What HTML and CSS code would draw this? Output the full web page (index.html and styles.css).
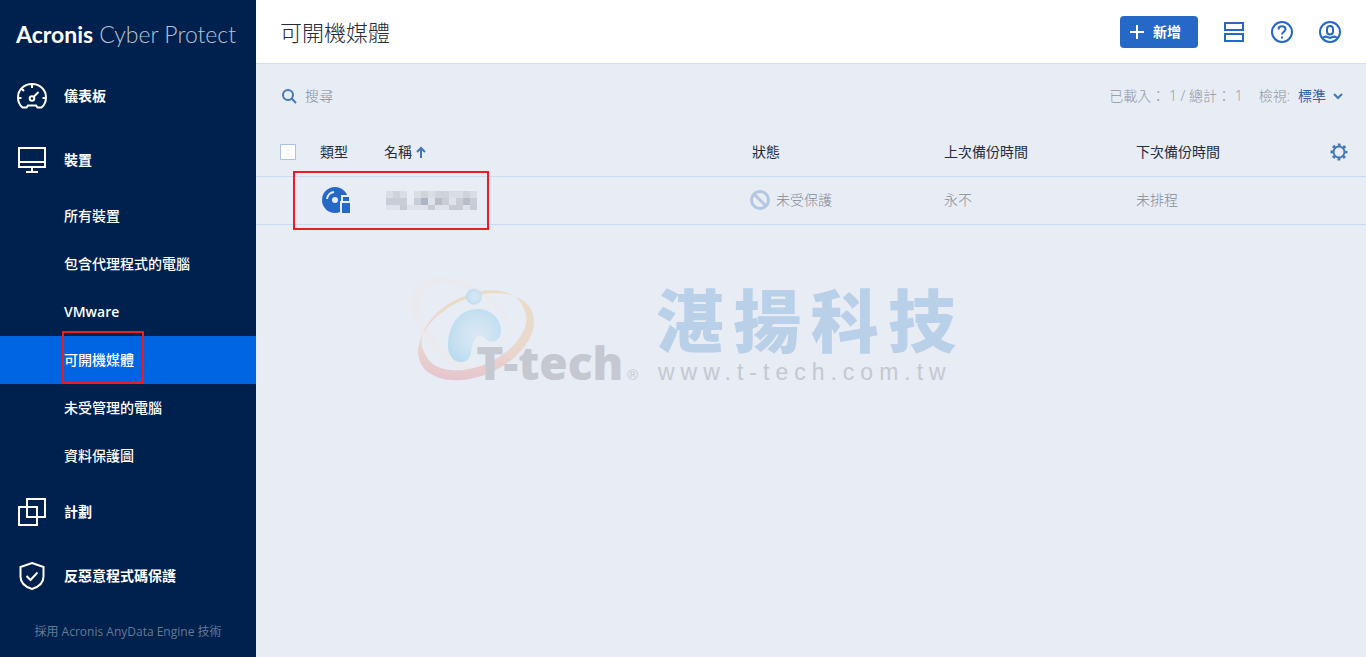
FILE: index.html
```
<!DOCTYPE html>
<html lang="zh-Hant">
<head>
    <meta charset="UTF-8">
    <title>Acronis Cyber Protect</title>
    <meta name="viewport" content="width=device-width, initial-scale=1.0">
    <link rel="stylesheet" href="styles.css">
</head>
<body>
    <aside class="sidebar">
        <div class="brand"><b>Acronis</b><span>Cyber Protect</span></div>
        <nav class="menu">
            <a class="menu-item" href="#">
                <svg width="32" height="32" viewBox="0 0 32 32">
                    <path d="M6.500 27.500C3.600 25 2 21.500 2 17.500C2 9.500 8.300 4 16 4s14 5.500 14 13.500c0 4-1.600 7.500-4.500 10h-4l-1.500-2h-8l-1.500 2z"/>
                    <path d="M16 4v4M2.500 18h3M26.500 18h3M6 9l2 2M18 16.500l4.500-4.500"/>
                    <circle cx="16" cy="18.500" r="2.300"/>
                </svg>
                <span>儀表板</span>
            </a>
            <a class="menu-item" href="#">
                <svg width="32" height="32" viewBox="0 0 32 32">
                    <path d="M3 4h26v19H3zM3 18h26M16 23v5M10 28h12"/>
                </svg>
                <span>裝置</span>
            </a>
            <div class="submenu">
                <a href="#">所有裝置</a>
                <a href="#">包含代理程式的電腦</a>
                <a class="latin" href="#">VMware</a>
                <a class="active" href="#"><span class="marked">可開機媒體</span></a>
                <a href="#">未受管理的電腦</a>
                <a href="#">資料保護圖</a>
            </div>
            <a class="menu-item" href="#">
                <svg width="32" height="32" viewBox="0 0 32 32">
                    <path d="M11 3h18v18H11zM3 11h18v18H3z"/>
                </svg>
                <span>計劃</span>
            </a>
            <a class="menu-item" href="#">
                <svg width="32" height="32" viewBox="0 0 32 32">
                    <path d="M16 3l11.500 4v9.500c0 6-5 10.500-11.500 12.500c-6.500-2-11.500-6.500-11.500-12.500V7z"/>
                    <path d="M10.500 16l4 4l7-7.500"/>
                </svg>
                <span>反惡意程式碼保護</span>
            </a>
        </nav>
        <p class="powered">採用 Acronis AnyData Engine 技術</p>
    </aside>

    <main class="content">
        <header class="topbar">
            <h1>可開機媒體</h1>
            <div class="actions">
                <button class="add" type="button">
                    <svg width="14" height="14" viewBox="0 0 14 14"><path d="M7 0v14M0 7h14"/></svg>
                    新增
                </button>
                <button class="icon-button" type="button" aria-label="版面">
                    <svg width="24" height="24" viewBox="0 0 24 24"><path d="M3 3h18v7H3zM3 14h18v7H3z"/></svg>
                </button>
                <button class="icon-button" type="button" aria-label="說明">
                    <svg width="24" height="24" viewBox="0 0 24 24">
                        <circle cx="12" cy="12" r="10"/>
                        <path d="M8.500 9.500c0-2 1.500-3.200 3.500-3.200s3.500 1.200 3.500 3c0 2.400-3.500 2.500-3.500 5.200M12 16.500v2"/>
                    </svg>
                </button>
                <button class="icon-button" type="button" aria-label="帳戶">
                    <svg width="24" height="24" viewBox="0 0 24 24">
                        <circle cx="12" cy="12" r="10"/>
                        <rect x="9" y="6" width="6" height="8.500" rx="3"/>
                        <path d="M4.500 18c2-1.500 4-1.500 5-1l2.500 1l2.500-1c1-.5 3-.5 5 1"/>
                    </svg>
                </button>
            </div>
        </header>

        <div class="toolbar">
            <label class="search">
                <svg width="16" height="16" viewBox="0 0 16 16"><circle cx="7" cy="7" r="5"/><path d="M10.500 10.500l4.500 4.500"/></svg>
                <input type="text" placeholder="搜尋" aria-label="搜尋">
            </label>
            <div class="summary">
                <span>已載入： 1 / 總計： 1</span>
                <label for="view">檢視:</label>
                <span class="view">
                    <select id="view"><option>標準</option></select>
                    <svg width="10" height="8" viewBox="0 0 10 8"><path d="M1 2l4 4l4-4"/></svg>
                </span>
            </div>
        </div>

        <table class="devices">
            <colgroup>
                <col class="col-check"><col class="col-type"><col>
                <col class="col-info"><col class="col-info"><col class="col-info"><col class="col-gear">
            </colgroup>
            <thead>
                <tr>
                    <th class="check"><input type="checkbox" aria-label="全選"></th>
                    <th>類型</th>
                    <th>名稱 <svg class="sort" width="10" height="14" viewBox="0 0 10 14"><path d="M5 12V2M1 6l4-4l4 4"/></svg></th>
                    <th>狀態</th>
                    <th>上次備份時間</th>
                    <th>下次備份時間</th>
                    <th class="gear">
                        <button class="icon-button" type="button" aria-label="設定">
                            <svg width="18" height="18" viewBox="0 0 18 18">
                                <circle class="wheel" cx="9" cy="9" r="5.500"/>
                                <circle class="teeth" cx="9" cy="9" r="7"/>
                            </svg>
                        </button>
                    </th>
                </tr>
            </thead>
            <tbody>
                <tr>
                    <td></td>
                    <td class="type">
                        <svg width="32" height="32" viewBox="0 0 32 32">
                            <circle class="fill" cx="15" cy="16" r="13"/>
                            <circle class="hole" cx="15" cy="16" r="3"/>
                            <path class="shine" d="M7 15a8 8 0 0 1 7-7"/>
                            <path class="hole" d="M20 17h1v-6h11v20H20z"/>
                            <path class="fill" d="M23 13h6v4h-6zM22 19h8v10h-8z"/>
                        </svg>
                    </td>
                    <td>
                        <svg class="mosaic" width="92" height="19" viewBox="0 0 92 19">
                            <path fill="#d9dde6" d="M0 0h21v7H0zM28 0h63v7H28z"/>
                            <path fill="#ced3dc" d="M7 0h7v7H7zM35 0h7v7h-7zM49 0h14v7H49zM77 0h7v7h-7z"/>
                            <path fill="#c9cdd8" d="M0 7h21v7H0zM28 7h14v7H28zM49 7h42v7H49z"/>
                            <path fill="#adb4c3" d="M35 7h7v7h-7z"/>
                            <path fill="#b8bdc7" d="M49 7h7v7h-7zM77 7h7v7h-7z"/>
                            <path fill="#dfe2ea" d="M42 7h7v7h-7zM63 7h7v7h-7zM0 14h91v5H0z"/>
                            <path fill="#c8cbd4" d="M14 14h7v5h-7zM42 14h7v5h-7zM63 14h14v5H63zM84 14h7v5h-7z"/>
                            <path fill="#e7ecf5" d="M21 0h7v14h-7z"/>
                        </svg>
                    </td>
                    <td>
                        <span class="status">
                            <svg width="20" height="20" viewBox="0 0 20 20"><circle cx="10" cy="10" r="8.500"/><path d="M4 4l12 12"/></svg>
                            未受保護
                        </span>
                    </td>
                    <td>永不</td>
                    <td>未排程</td>
                    <td></td>
                </tr>
            </tbody>
        </table>
    </main>

    <div class="watermark">
        <svg width="230" height="107" viewBox="30 12 690 321">
            <defs>
                <linearGradient id="ring" x1="0.500" y1="0" x2="0.400" y2="1">
                    <stop offset="0" stop-color="#e9dcc6"/>
                    <stop offset="0.600" stop-color="#e9d8cf"/>
                    <stop offset="1" stop-color="#e6c5ce"/>
                </linearGradient>
                <radialGradient id="drop" cx="0.550" cy="0.500" r="0.600">
                    <stop offset="0" stop-color="#dbe7f4"/>
                    <stop offset="0.500" stop-color="#cee3f2"/>
                    <stop offset="1" stop-color="#b9dcef"/>
                </radialGradient>
            </defs>
            <path fill="#ebeaee" fill-rule="evenodd" d="M52 47A185 115 40 1 1 336 285A185 115 40 1 1 52 47zM76 59A172 98 40 1 1 340 281A172 98 40 1 1 76 59z"/>
            <path fill="url(#ring)" fill-rule="evenodd" d="M61 275A184 116-25 1 1 395 119A184 116-25 1 1 61 275zM75 247A163 98-25 1 1 369 109A163 98-25 1 1 75 247z"/>
            <circle cx="222" cy="77" r="24" fill="url(#drop)"/>
            <path fill="url(#drop)" d="M144 225C144 150 190 114 232 114C275 114 303 145 303 180C303 200 290 212 275 212C258 212 255 195 240 195C222 195 217 225 213 245C210 262 200 273 183 273C158 273 144 250 144 225z"/>
            <text class="logo-name" x="229" y="327">T-tech</text>
            <text class="logo-mark" x="682" y="326">®</text>
        </svg>
        <div class="company">
            <div class="company-name"><span>湛</span><span>揚</span><span>科</span><span>技</span></div>
            <div class="company-url">www.t-tech.com.tw</div>
        </div>
    </div>
</body>
</html>
```
FILE: styles.css
```
*,
*::after {
    box-sizing: border-box;
}

body {
    margin: 0;
    min-height: 100vh;
    display: flex;
    position: relative;
    font-family: "Open Sans", "Noto Sans CJK TC", sans-serif;
    font-size: 14px;
    line-height: 20px;
    color: #262b38;
    background-color: #e7ecf5;
}

a {
    color: inherit;
    text-decoration: none;
}

svg {
    flex: none;
    fill: none;
    stroke: #2668c5;
    stroke-width: 2;
}

button {
    font: inherit;
    border: none;
    padding: 0;
    cursor: pointer;
}

/* sidebar */
.sidebar {
    flex: 0 0 256px;
    display: flex;
    flex-direction: column;
    background-color: #00204d;
    color: #fff;
}

.brand {
    display: flex;
    gap: 6px;
    height: 64px;
    padding: 4px 16px 0;
    font-family: Lato, sans-serif;
    font-size: 23px;
    line-height: 60px;
    white-space: nowrap;
}

.brand span {
    font-weight: 300;
    color: #b8c4d6;
}

.menu-item {
    display: flex;
    align-items: center;
    gap: 16px;
    height: 64px;
    padding: 0 16px;
    font-weight: 700;
}

.menu-item svg {
    stroke: #fff;
}

.submenu a {
    display: flex;
    align-items: center;
    height: 48px;
    padding-left: 64px;
    font-weight: 500;
}

.submenu .latin {
    font-weight: 600;
}

.submenu .active {
    background-color: #0065e3;
}

/* red highlight frames */
.marked,
.type {
    position: relative;
}

.marked::after,
.type::after {
    content: "";
    position: absolute;
    border: 2px solid #ed1c24;
}

.marked::after {
    inset: -19px -10px -14px -2px;
}

.type::after {
    top: -6px;
    left: -27px;
    width: 196px;
    height: 59px;
}

.powered {
    margin: 14px 0 0;
    text-align: center;
    font-size: 12px;
    color: #667995;
}

/* top bar */
.content {
    flex: 1;
    min-width: 0;
}

.topbar {
    display: flex;
    align-items: center;
    justify-content: space-between;
    height: 64px;
    padding: 0 24px;
    background-color: #fff;
    border-bottom: 1px solid #d0dcef;
}

h1 {
    margin: 0;
    font-size: 22px;
    line-height: 32px;
    font-weight: 300;
}

.actions {
    display: flex;
    align-items: center;
    gap: 24px;
}

.add {
    display: flex;
    align-items: center;
    gap: 9px;
    height: 32px;
    padding: 0 17px 0 10px;
    border-radius: 4px;
    background-color: #2668c5;
    color: #fff;
    font-weight: 700;
}

.add svg {
    stroke: #fff;
}

.icon-button {
    display: flex;
    background: none;
}

/* search row */
.toolbar {
    display: flex;
    align-items: center;
    justify-content: space-between;
    height: 64px;
    padding: 0 23px 0 25px;
    color: #8f96a3;
    font-weight: 300;
}

.search {
    display: flex;
    align-items: center;
    gap: 8px;
}

.search svg,
.view svg,
.sort,
.gear svg {
    stroke: #4477b9;
}

.search input {
    width: 240px;
    padding: 0;
    border: none;
    background: none;
    font: inherit;
    outline: none;
}

.search input::placeholder {
    color: #858c9a;
}

.summary {
    display: flex;
    align-items: center;
}

.summary label {
    margin: 0 8px 0 16px;
}

.view {
    display: flex;
    align-items: center;
    gap: 7px;
}

.view select {
    appearance: none;
    border: none;
    padding: 0;
    background: none;
    font: inherit;
    font-weight: 400;
    color: #355f9f;
}

/* device list */
.devices {
    width: 100%;
    table-layout: fixed;
    border-collapse: collapse;
}

.devices tr {
    height: 48px;
    border-bottom: 1px solid #ccdaee;
}

.devices th,
.devices td {
    padding: 0;
    text-align: left;
    vertical-align: middle;
    font-weight: 400;
}

.devices td {
    font-weight: 300;
    color: #838a98;
}

.devices svg {
    vertical-align: middle;
}

.col-check,
.col-type {
    width: 64px;
}

.col-info {
    width: 192px;
}

.col-gear {
    width: 38px;
}

.check input {
    display: block;
    appearance: none;
    width: 16px;
    height: 16px;
    margin: 0 0 0 24px;
    border: 1px solid #abc0e2;
    background-color: #fff;
}

.gear .icon-button {
    margin-left: 2px;
}

.gear .teeth {
    stroke-width: 3;
    stroke-dasharray: 2.75;
    stroke-dashoffset: 1.4;
}

.fill {
    fill: #2668c5;
    stroke: none;
}

.hole {
    fill: #e7ecf5;
    stroke: none;
}

.shine {
    stroke: #e7ecf5;
}

.mosaic {
    stroke: none;
    margin-left: 2px;
}

.status {
    display: flex;
    align-items: center;
    gap: 6px;
    margin-left: -2px;
}

.status svg {
    stroke: #b3c6e2;
    stroke-width: 3;
}

/* watermark over the whole page */
.watermark {
    position: absolute;
    inset: 0;
    display: flex;
    align-items: center;
    justify-content: center;
    gap: 16px;
    pointer-events: none;
}

.watermark svg {
    stroke: none;
    overflow: visible;
}

.logo-name {
    font-size: 138px;
    font-weight: 800;
    fill: #c5c8d1;
}

.logo-mark {
    font-family: "Liberation Sans", sans-serif;
    font-size: 44px;
    fill: #c5c8d1;
}

.company {
    width: 300px;
    margin-top: 10px;
}

.company-name {
    display: flex;
    justify-content: space-between;
    font-family: "Noto Sans CJK TC", sans-serif;
    font-size: 68px;
    line-height: 72px;
    font-weight: 900;
    color: #b9d0e8;
}

.company-url {
    padding: 4px 0 0 2px;
    font-family: "Liberation Sans", sans-serif;
    font-size: 23px;
    line-height: 28px;
    letter-spacing: 6px;
    white-space: nowrap;
    color: #c5c8d1;
}
```
